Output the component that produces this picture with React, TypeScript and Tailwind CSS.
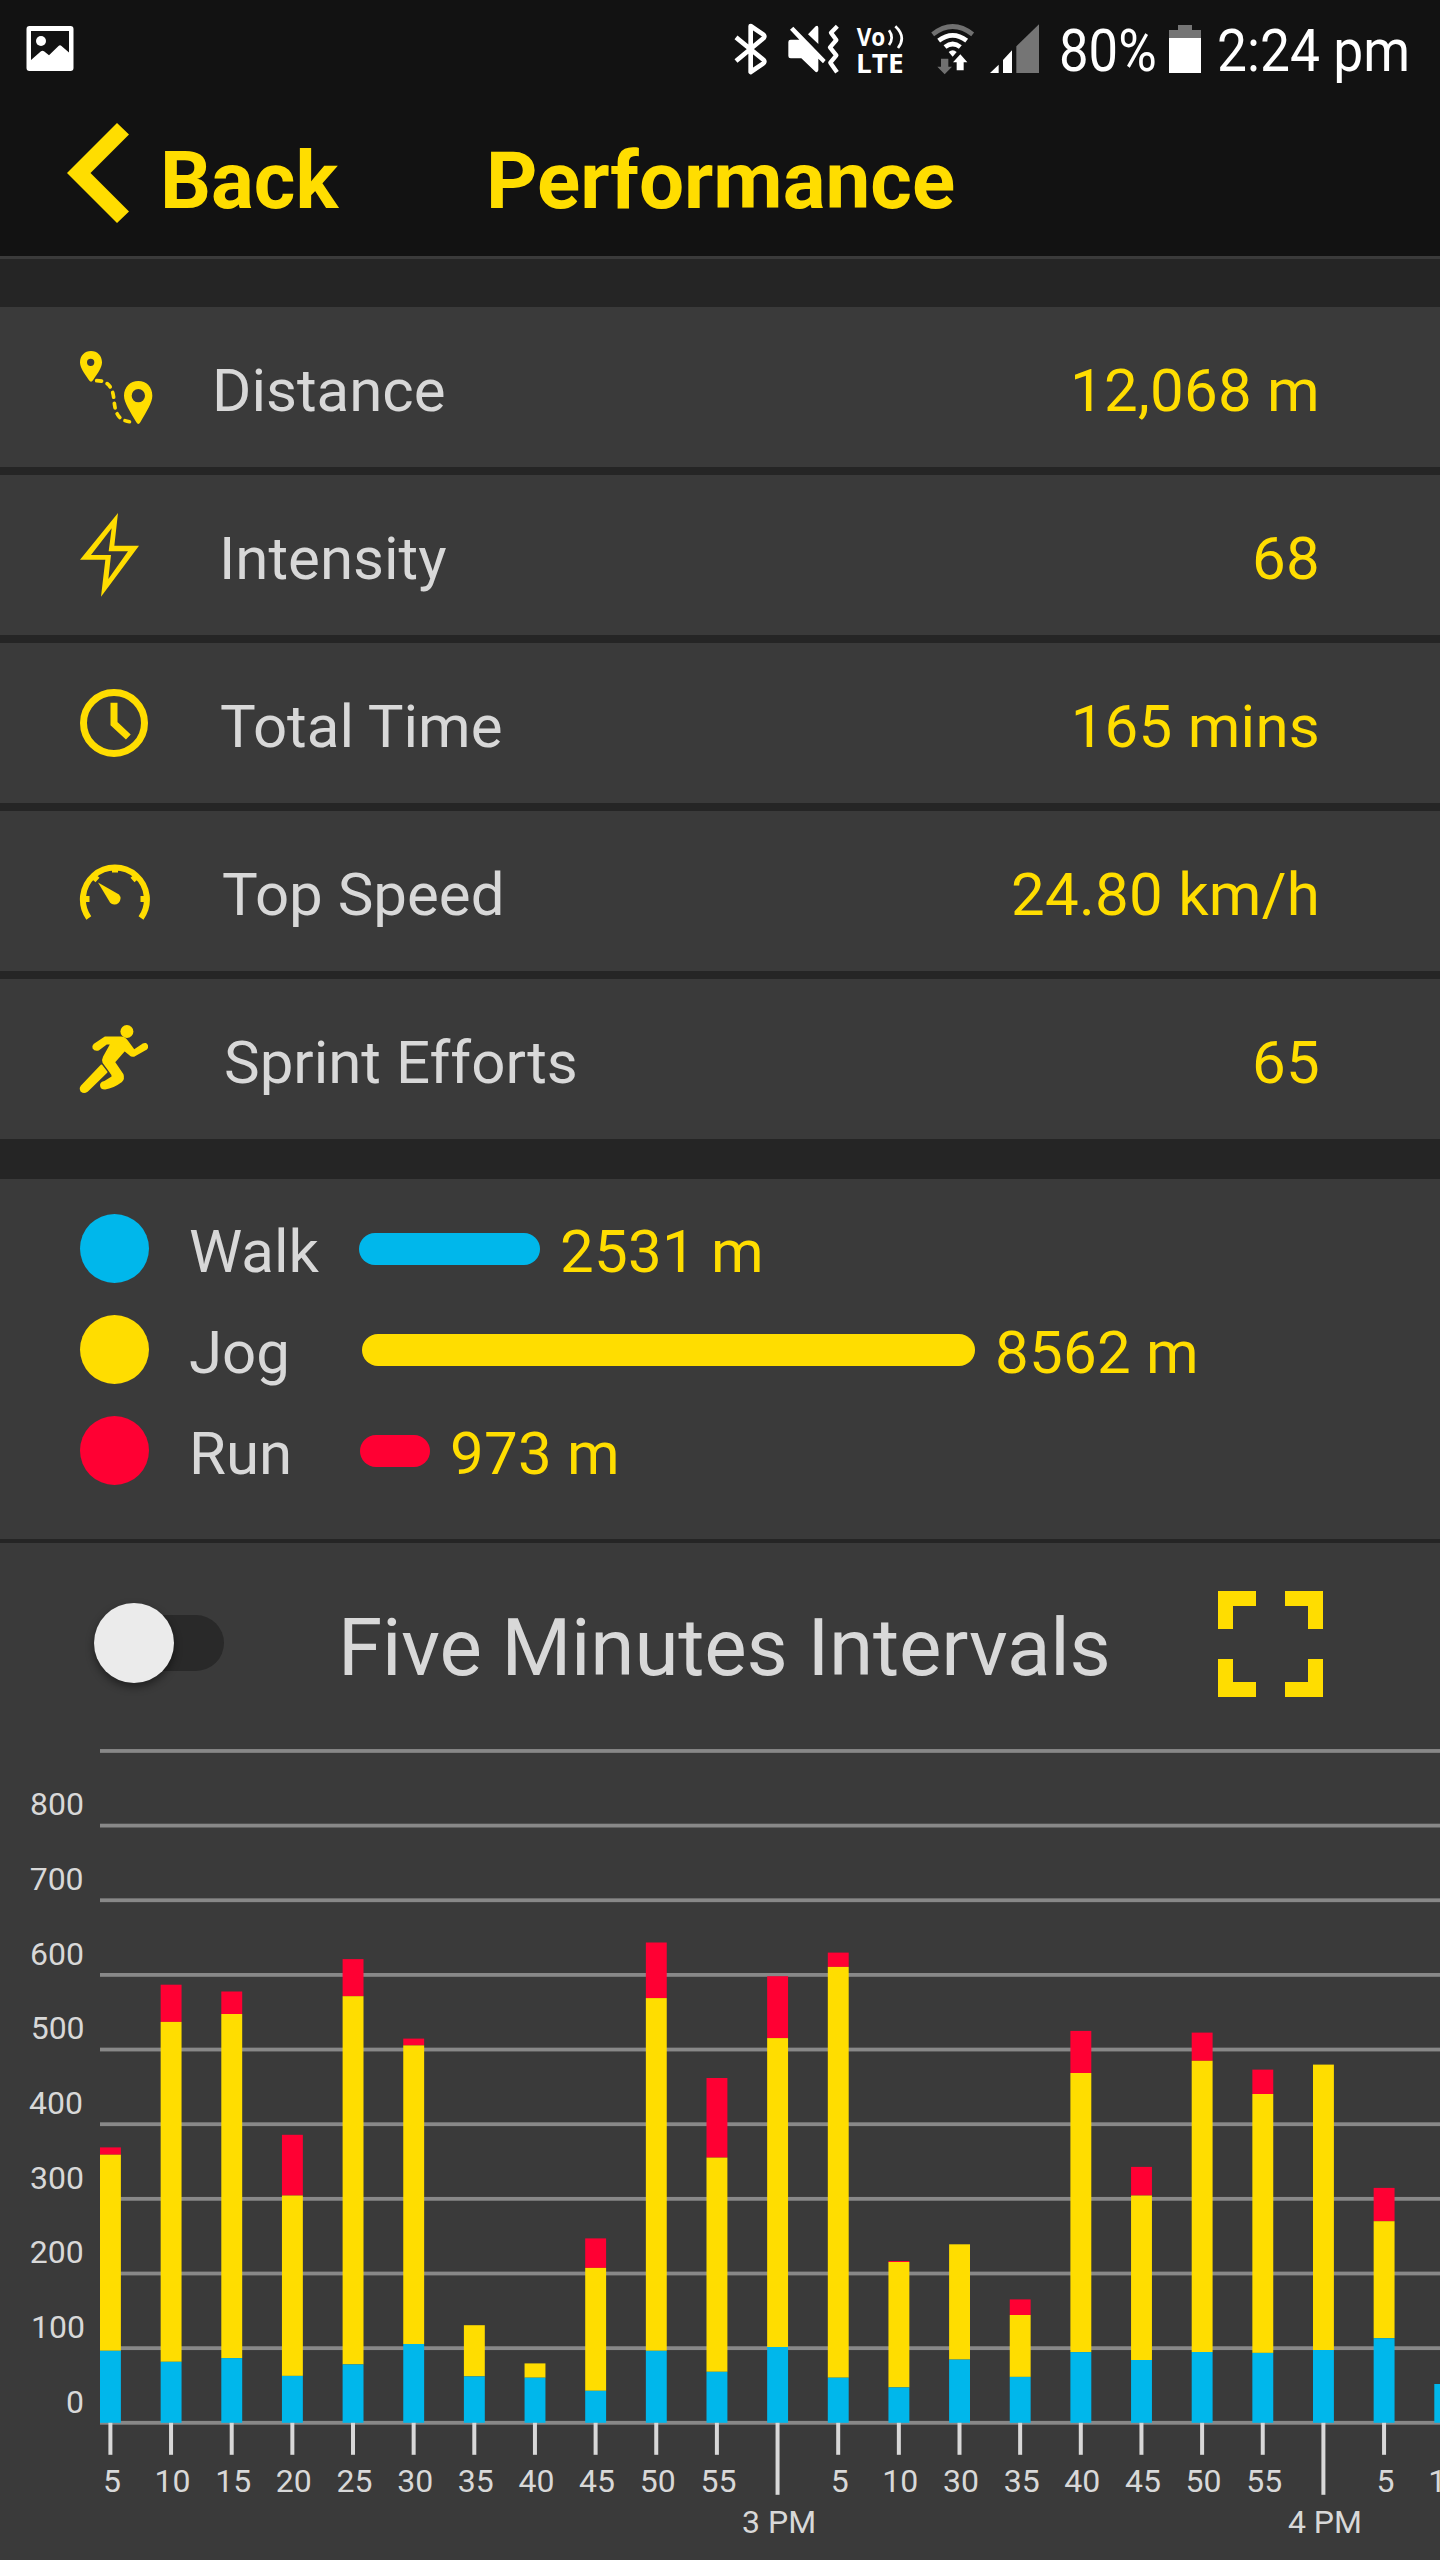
import type { ReactNode } from "react";

const YELLOW = "#ffdd00";
const BLUE = "#00b7eb";
const RED = "#ff0033";

function StatusBar() {
  return (
    <div className="flex h-[100px] items-start text-white">
      <svg className="ml-[26px] mt-[26px] h-[45px] w-[48px] shrink-0" viewBox="26 26 48 45">
        <path
          fill="#fff"
          fillRule="evenodd"
          d="M29.5 26H70.5A3 3 0 0 1 73.5 29V68A3 3 0 0 1 70.5 71H29.5A3 3 0 0 1 26.5 68V29A3 3 0 0 1 29.5 26ZM31 31V60L41 51.2Q42.500 50.200 44 51.2L49 55.200L58.500 46Q60 44.700 61.500 46L69 52.500V31Z"
        />
        <circle cx="41" cy="41" r="5" fill="#fff" />
      </svg>

      <svg className="ml-[659px] mt-3 h-[76px] w-[35px] shrink-0" viewBox="24 0 105 228">
        <path
          d="M33 76L116 144Q121 150 114 155L77 180V42L114 67Q121 73 116 78L33 147"
          fill="none"
          stroke="#fff"
          strokeWidth="14"
          strokeLinejoin="round"
        />
      </svg>

      <svg className="ml-[18px] mt-3 h-[76px] w-[54px] shrink-0" viewBox="183 0 162 228">
        <path
          fill="#fff"
          d="M205 44L302 144L294 154L280 140V175Q279 182 272 180L229 139H197Q190 139 190 132V90Q190 83 197 83H223L195 53ZM249 67L272 43Q279 38 280 47V96Z"
        />
        <path d="M337 43L318 62L334 84L315 106L334 130L316 152L336 181" fill="none" stroke="#fff" strokeWidth="13" strokeLinejoin="round" />
      </svg>

      <svg className="ml-[15px] mt-3 h-[76px] w-[50px] shrink-0" viewBox="390 0 150 228">
        <text x="395" y="101" textLength="86" lengthAdjust="spacingAndGlyphs" fill="#fff" fontSize="75" fontWeight="700" fontFamily="Open Sans">Vo</text>
        <text x="393" y="183" textLength="143" lengthAdjust="spacingAndGlyphs" fill="#fff" fontSize="82" fontWeight="700" fontFamily="Open Sans">LTE</text>
        <path d="M492 55Q508 77 492 99M511 43Q545 75 519 108" fill="none" stroke="#fff" strokeWidth="8" />
      </svg>

      <svg className="ml-6 mt-3 h-[76px] w-[47px] shrink-0" viewBox="612 0 141 228">
        <g fill="none" strokeWidth="14">
          <path d="M623 67Q683 20 743 67" stroke="#707070" />
          <path d="M641 86Q683 54 725 86M660 105Q683 87 706 105" stroke="#fff" />
        </g>
        <path d="M671 120Q683 109 695 120L683 134Z" fill="#fff" />
        <path d="M648 140H670V164H681L659 187L637 164H648Z" fill="#707070" />
        <path d="M695 175V151H684L706 127L727 151H716V175Z" fill="#fff" />
      </svg>

      <svg className="ml-[13px] mt-3 h-[76px] w-[51px] shrink-0" viewBox="792 0 153 228">
        <path d="M795 183L821 158V183ZM834 183V144L861 115V183Z" fill="#fff" />
        <path d="M874 183V103L942 37V183Z" fill="#757575" />
      </svg>

      <div className="ml-[19px] mt-[15px] w-[110px] shrink-0">
        <span className="inline-block origin-left scale-x-[0.877] whitespace-nowrap text-[60px] leading-[72px]">80%</span>
      </div>
      <svg className="mt-[25px] h-12 w-8 shrink-0" viewBox="0 0 32 48">
        <path d="M9 0H23V5H32V14H0V5H9Z" fill="#757575" />
        <path d="M0 13H32V48H0Z" fill="#fff" />
      </svg>
      <div className="ml-4 mt-[15px] w-[190px] shrink-0">
        <span className="inline-block origin-left scale-x-[0.89] whitespace-nowrap text-[60px] leading-[72px]">2:24 pm</span>
      </div>
    </div>
  );
}

function Header() {
  return (
    <header className="flex h-[156px] items-start text-[80px] font-bold leading-[94px] text-[#ffdd00]">
      <svg className="ml-[67px] mt-[23px] h-[100px] w-[62px] shrink-0" viewBox="0 0 62 100">
        <path d="M50 0L62 11.500L23.500 50L62 88.500L50 100L0 50Z" fill={YELLOW} />
      </svg>
      <span className="ml-[31px] mt-[34px] w-[326px]">Back</span>
      <h1 className="mt-[34px]">Performance</h1>
    </header>
  );
}

function DistanceIcon() {
  return (
    <svg className="ml-[79px] h-[75px] w-[74px]" viewBox="237 150 222 225">
      <path
        fill={YELLOW}
        fillRule="evenodd"
        d="M273 153C292 153 306 167 306 187C306 203 294 219 279 241Q273 249 267 241C252 219 240 203 240 187C240 167 254 153 273 153ZM272 176A11 11 0 1 0 272 198A11 11 0 1 0 272 176ZM415 243C439 243 457 261 457 287C457 308 440 333 421 367Q415 377 409 367C390 333 372 308 372 287C372 261 391 243 415 243ZM415 267A20 20 0 1 0 415 307A20 20 0 1 0 415 267Z"
      />
      <path
        d="M290 242C325 242 337 263 341 292C345 330 347 366 402 366"
        fill="none"
        stroke={YELLOW}
        strokeWidth="11"
        strokeLinecap="round"
        strokeDasharray="14 18.500"
      />
    </svg>
  );
}

function BoltIcon() {
  return (
    <svg className="ml-[80px] h-[84px] w-[59px]" viewBox="240 640 177 252">
      <path
        fill={YELLOW}
        fillRule="evenodd"
        d="M354 640L240 780H316L303 891L417 738H343ZM335 686L273 766H333L325 838L384 755H326Z"
      />
    </svg>
  );
}

function ClockIcon() {
  return (
    <svg className="ml-[80px] h-[68px] w-[68px]" viewBox="240 1167 204 204">
      <g fill="none" stroke={YELLOW} strokeWidth="21">
        <circle cx="342" cy="1269" r="91.500" />
        <path d="M342 1208V1271L385 1311" />
      </g>
    </svg>
  );
}

function GaugeIcon() {
  return (
    <svg className="ml-[79px] h-[59px] w-[72px]" viewBox="79 862 72 59">
      <path d="M88.800 918A32 32 0 1 1 141 918" fill="none" stroke={YELLOW} strokeWidth="6" />
      <path
        d="M115 867V872.500M84 899H89.500M146 899H140.500M93 876L97.500 880M137 876L132.500 880"
        fill="none"
        stroke={YELLOW}
        strokeWidth="6"
      />
      <path d="M98 882.500L119 894.500A6 6 0 1 1 110 902.500Z" fill={YELLOW} />
    </svg>
  );
}

function SprintIcon() {
  return (
    <svg className="ml-[79px] h-[69px] w-[71px]" viewBox="79 1025 71 69">
      <g fill={YELLOW} stroke={YELLOW} strokeLinejoin="round">
        <circle cx="126.900" cy="1031.500" r="6.500" stroke="none" />
        <path
          strokeWidth="2"
          d="M105 1037.500H121Q124.500 1037.500 127 1041L134 1050.500L143 1044.500Q146 1043 147 1045.500Q147.500 1047.500 146 1049L134.500 1055.500Q132 1056.500 130 1054.500L124.500 1050L114 1062L122.500 1074.500Q124 1078.500 121 1081.500Q113 1087.500 105 1088.500Q101 1088.500 101 1085Q101.500 1082.500 104.500 1082L112.500 1077Q113 1074.500 110.500 1072L103.500 1062.500Q102.500 1060 104 1057L111.500 1043.500H106.500L98.500 1049.500Q95 1050.500 93.500 1048Q93 1046 94.500 1044.500Z"
        />
        <path strokeWidth="2" d="M101.500 1065.500L106.500 1072L87 1091Q84 1093 81.500 1091Q80 1088.500 81.500 1086.500Z" />
      </g>
    </svg>
  );
}

type Metric = { label: string; value: string; offset: string; icon: ReactNode };

const metrics: Metric[] = [
  { label: "Distance", value: "12,068 m", offset: "w-[212px]", icon: <DistanceIcon /> },
  { label: "Intensity", value: "68", offset: "w-[219px]", icon: <BoltIcon /> },
  { label: "Total Time", value: "165 mins", offset: "w-[220px]", icon: <ClockIcon /> },
  { label: "Top Speed", value: "24.80 km/h", offset: "w-[222px]", icon: <GaugeIcon /> },
  { label: "Sprint Efforts", value: "65", offset: "w-[224px]", icon: <SprintIcon /> },
];

function MetricRow({ label, value, offset, icon }: Metric) {
  return (
    <li className="flex h-[160px] items-center bg-[#3a3a3a] pr-[120px] text-[60px] leading-[70px]">
      <div className={`${offset} shrink-0`}>{icon}</div>
      <span className="pt-[7px] text-[#d8d8d8]">{label}</span>
      <span className="ml-auto pt-[7px] tracking-[0.25px] text-[#ffdd00]">{value}</span>
    </li>
  );
}

const paces = [
  { label: "Walk", value: "2531 m", color: "bg-[#00b7eb]", bar: "w-[181px]", labelWidth: "w-[170px]" },
  { label: "Jog", value: "8562 m", color: "bg-[#ffdd00]", bar: "w-[613px]", labelWidth: "w-[173px]" },
  { label: "Run", value: "973 m", color: "bg-[#ff0033]", bar: "w-[70px]", labelWidth: "w-[171px]" },
];

function PaceBreakdown() {
  return (
    <section className="h-[360px] bg-[#3a3a3a] pt-[19px]">
      {paces.map((p) => (
        <div key={p.label} className="flex h-[101px] items-center text-[60px] leading-[70px]">
          <div className={`ml-[80px] h-[69px] w-[69px] rounded-full ${p.color}`} />
          <span className={`ml-10 pt-[6px] text-[#d8d8d8] ${p.labelWidth}`}>{p.label}</span>
          <div className={`h-8 rounded-full ${p.color} ${p.bar}`} />
          <span className="ml-5 pt-[6px] tracking-[0.25px] text-[#ffdd00]">{p.value}</span>
        </div>
      ))}
    </section>
  );
}

function IntervalToggle() {
  return (
    <div className="flex h-[200px] items-center">
      <div className="ml-[94px] flex h-20 w-[130px] items-center">
        <div className="-mr-20 ml-[10px] h-14 w-[120px] rounded-full bg-[#292929]" />
        <div className="-ml-[50px] h-20 w-20 shrink-0 rounded-full bg-[#ebebeb] shadow-[0_4px_8px_rgba(0,0,0,0.45)]" />
      </div>
      <h2 className="ml-[114px] w-[879.5px] pt-[9px] text-[80px] leading-[94px] tracking-[-0.16px] text-[#d8d8d8]">
        Five Minutes Intervals
      </h2>
      <svg className="mt-[2px] h-[106px] w-[105px] shrink-0" viewBox="0 0 105 106">
        <path
          d="M0 0H38V15H15V38H0ZM67 0H105V38H90V15H67ZM0 68H15V91H38V106H0ZM90 68H105V106H67V91H90Z"
          fill={YELLOW}
        />
      </svg>
    </div>
  );
}

const CHART_TOP = 1743;
const BASE = 2422.8;
const STEP = 74.65;
const PITCH = 60.65;

/* Each bar lists the page-space y of the top of its run, jog and walk segments. */
const bars: { label: string; major?: boolean; tops: [number, number, number] }[] = [
  { label: "5", tops: [2147.4, 2154.7, 2350.8] },
  { label: "10", tops: [1984.7, 2021.9, 2361.8] },
  { label: "15", tops: [1991.5, 2014, 2358.1] },
  { label: "20", tops: [2134.8, 2195.5, 2375.9] },
  { label: "25", tops: [1959.1, 1996.2, 2364.4] },
  { label: "30", tops: [2038.6, 2045.4, 2344] },
  { label: "35", tops: [2325.2, 2325.2, 2376.4] },
  { label: "40", tops: [2363.4, 2363.4, 2377.7] },
  { label: "45", tops: [2238.4, 2267.9, 2390.8] },
  { label: "50", tops: [1942.5, 1998.1, 2350.8] },
  { label: "55", tops: [2078, 2157.6, 2371.8] },
  { label: "3 PM", major: true, tops: [1976.2, 2038.1, 2347] },
  { label: "5", tops: [1952.6, 1966.9, 2377.7] },
  { label: "10", tops: [2261, 2262, 2387.4] },
  { label: "30", tops: [2244.3, 2244.3, 2359.6] },
  { label: "35", tops: [2299.4, 2315, 2376.9] },
  { label: "40", tops: [2030.9, 2073, 2352.1] },
  { label: "45", tops: [2166.9, 2195.5, 2360] },
  { label: "50", tops: [2032.6, 2060.8, 2352] },
  { label: "55", tops: [2069.6, 2094, 2352.9] },
  { label: "4 PM", major: true, tops: [2064.6, 2064.6, 2350] },
  { label: "5", tops: [2187.9, 2221.2, 2338.2] },
  { label: "10", tops: [2384, 2384, 2384] },
];

const axis = [
  { label: "0", x: 84 },
  { label: "100", x: 85 },
  { label: "200", x: 83.8 },
  { label: "300", x: 84 },
  { label: "400", x: 83 },
  { label: "500", x: 84.6 },
  { label: "600", x: 84 },
  { label: "700", x: 83.6 },
  { label: "800", x: 84 },
];

function IntervalChart() {
  return (
    <svg className="block h-[817px] w-[1440px]" viewBox={`0 ${CHART_TOP} 1440 817`} fontFamily="Roboto, sans-serif" fontSize="32">
      {Array.from({ length: 10 }, (_, i) => (
        <rect key={i} x="100" y={BASE - STEP * i - 1.9} width="1340" height="3.8" fill="#888888" />
      ))}
      {axis.map((a, i) => (
        <text key={a.label} x={a.x} y={BASE - STEP * i - 10.2} textAnchor="end" fill="#d8d8d8">
          {a.label}
        </text>
      ))}
      {bars.map((b, i) => {
        const x = 100 + PITCH * i;
        const mid = x + 10.4;
        const [run, jog, walk] = b.tops;
        return (
          <g key={i}>
            <rect x={x} y={run} width="20.9" height={jog - run} fill={RED} />
            <rect x={x} y={jog} width="20.9" height={walk - jog} fill={YELLOW} />
            <rect x={x} y={walk} width="20.9" height={BASE - walk} fill={BLUE} />
            <rect x={mid - 2} y={BASE} width="4" height={b.major ? 72 : 32} fill="#d8d8d8" />
            <text x={mid + 1.5} y={b.major ? 2532.5 : 2492.2} textAnchor="middle" fill="#d8d8d8">
              {b.label}
            </text>
          </g>
        );
      })}
    </svg>
  );
}

export default function App() {
  return (
    <div className="h-[2560px] w-[1440px] overflow-hidden bg-[#252525] font-['Roboto',sans-serif]">
      <div className="border-b-[3px] border-[#3a3a3a] bg-[#121212]">
        <StatusBar />
        <Header />
      </div>
      <ul className="mt-12 flex flex-col gap-2">
        {metrics.map((m) => (
          <MetricRow key={m.label} {...m} />
        ))}
      </ul>
      <div className="mt-10">
        <PaceBreakdown />
      </div>
      <section className="mt-1 bg-[#3a3a3a]">
        <IntervalToggle />
        <IntervalChart />
      </section>
    </div>
  );
}
